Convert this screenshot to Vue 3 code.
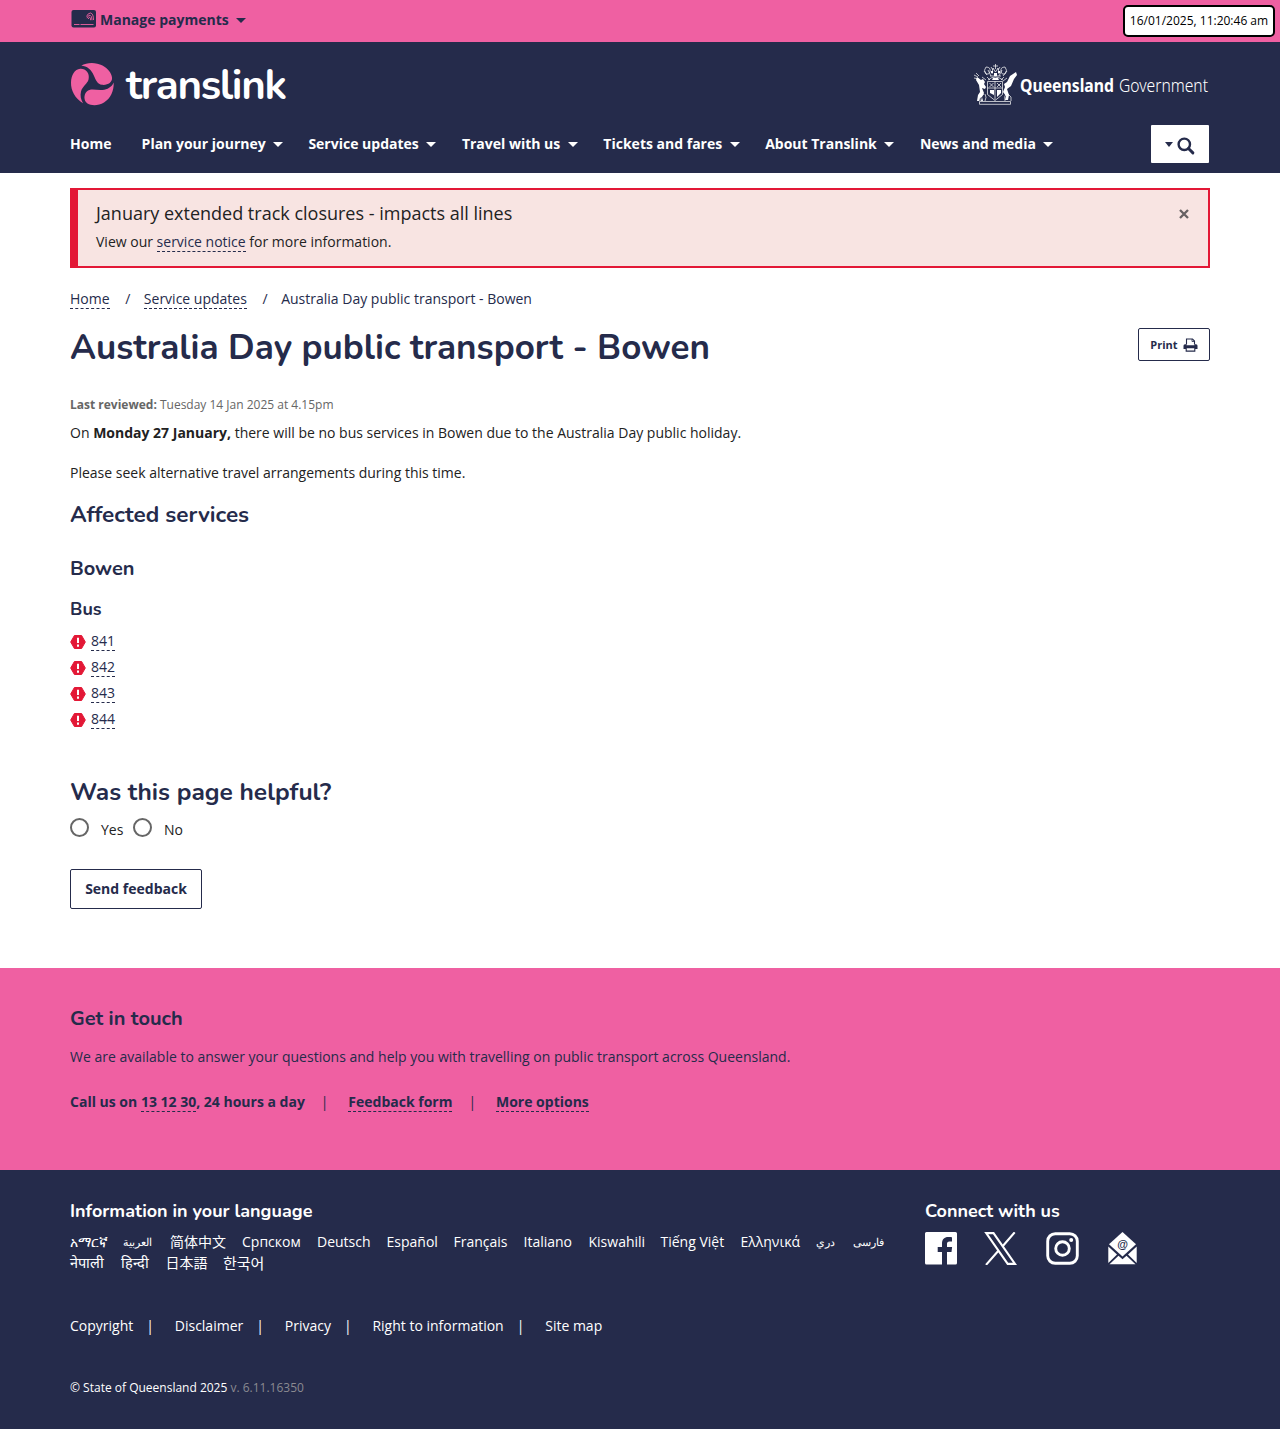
<script setup>
const nav = [
  { label: 'Home', w: 41.6 },
  { label: 'Plan your journey', w: 124, menu: true },
  { label: 'Service updates', w: 110.7, menu: true },
  { label: 'Travel with us', w: 98.7, menu: true },
  { label: 'Tickets and fares', w: 119, menu: true },
  { label: 'About Translink', w: 112, menu: true },
  { label: 'News and media', w: 116, menu: true },
]
const routes = ['841', '842', '843', '844']
const languages = [
  [
    { t: 'አማርኛ', w: 37 }, { t: 'العربية', w: 31, ar: true }, { t: '简体中文', w: 56 },
    { t: 'Српском', w: 59 }, { t: 'Deutsch', w: 53.5 }, { t: 'Español', w: 51 },
    { t: 'Français', w: 54 }, { t: 'Italiano', w: 49 }, { t: 'Kiswahili', w: 56 },
    { t: 'Tiếng Việt', w: 64 }, { t: 'Ελληνικά', w: 59.5 }, { t: 'دري', w: 20.5, ar: true },
    { t: 'فارسی', w: 32, ar: true },
  ],
  [
    { t: 'नेपाली', w: 34.5, hi: true }, { t: 'हिन्दी', w: 29, hi: true }, { t: '日本語', w: 41.5, jp: true }, { t: '한국어', w: 42, ko: true },
  ],
]
const legal = ['Copyright', 'Disclaimer', 'Privacy', 'Right to information', 'Site map']
</script>

<template>
  <div class="page">
    <div class="topbar">
      <div class="wrap topbar-in">
        <svg class="card" width="25" height="18" viewBox="0 0 25 18">
          <rect x=".5" y="0" width="24.5" height="17.5" rx="2" fill="#252b4b" />
          <path d="M3 14.500h5.500M9.500 14.500h13" stroke="#ef60a2" stroke-width=".9" />
          <g fill="none" stroke="#ef60a2" stroke-width=".9">
            <path d="M15.500 6.500q1.500-3.500 4-3.500q3 .6 3 7M16 8.200q1-3 3-3q2 .5 2 5M17.300 9q.5-1.800 1.400-1.800q1 .5.900 3" />
          </g>
        </svg>
        <span class="pay">Manage payments</span><i class="caret"></i>
      </div>
      <div class="clock">16/01/2025, 11:20:46 am</div>
    </div>

    <header class="header">
      <div class="wrap">
        <div class="brand">
          <div class="logo">
            <svg width="44" height="44" viewBox="0 0 44 44">
              <g fill="#ef60a2">
                <path d="M11.300 3.600C17 .2 26 .1 32.500 3.600C38 6.600 41.500 11.300 42 15.500C42.600 20.500 37.500 23.400 32 22.800C27.500 22.300 26 18.500 23.800 13.500C21.300 7.500 17 4.300 11.300 3.600Z" />
                <path d="M10.200 6.800C15.500 6.400 20 11 18.600 17.300C17.500 22 12.500 24 11 29.500C10 33.300 10.800 37.500 13 41.200C5 36.500 .8 28.500 1 20.500C1.200 13 4.700 7.200 10.200 6.800Z" />
                <path d="M43.700 20.500C44 29 40.500 36.500 34 40.500C28.500 43.900 21.500 44 17.500 41.500C13.500 38.800 13.600 32.500 16.800 29.500C20.500 26 26 28.500 32.500 28C37.500 27.500 41.500 25.300 43.700 20.500Z" />
              </g>
            </svg>
            <svg class="wordmark" width="180" height="56" viewBox="0 0 180 56">
              <text x="6" y="37" textLength="161" class="word">translink</text>
            </svg>
          </div>
          <div class="gov">
            <svg width="45" height="43" viewBox="0 0 45 43">
              <g fill="none" stroke="#fff" stroke-width=".7">
                <path d="M6.500 38.500h31v2.800h-31zM13 11q-3-4 0-7q5 0 4 5q-1 3-4 2M32 11q3-4 0-7q-5 0-4 5q1 3 4 2" />
                <path d="M14.500 18.500h15v13l-7.500 6-7.500-6zM14.500 25h15M22 18.500v18M16.500 20l4 4m0-4-4 4M24 20l4 4m0-4-4 4" />
                <path d="M15 17q7-6 15 0M17 13h11M19 11l1-6 2.500 4 2.500-4 1 6M22.500 1v5M20 3h5M14 14l3 3M31 14l-3 3M9 14l4 3M34 15l-4 3M11 8l3 4M15 7l3 6M29 7l-3 6M34 8l-4 5M18 4l2 3M27 4l-2 3" />
                <path d="M1 12l4 2M3 10l3 3M1 15l5 1M7 38v-4l4-3M38 38v-4l-4-4M12 38q2-4 0-7M32 38q-1-5 1-7" />
              </g>
              <g fill="#fff">
                <path d="M4 14l4 3 2-1 2 3-1 2 2 3-1 2-3-1 2 5-2 4 1 4H8l1-4-2 1-1 3H4l1-6 2-3-1-7-3-5z" />
                <path d="M43 9l1 3-3 4-3 7-4 3 2 6-1 5h-3l1-4-3-4 2-5-1-3 3-2 3-6 3-2z" />
                <path d="M17 27h4v5l-4-2zM24 27h4v3l-4 4zM20 15h5l1 2h-7zM18 8h2v2h-2zM25 8h2v2h-2zM21 10h3v3h-3z" />
              </g>
            </svg>
            <svg class="govword" width="210" height="36" viewBox="0 0 210 36">
              <text x="2" y="21" textLength="94" lengthAdjust="spacingAndGlyphs" class="qld">Queensland</text>
              <text x="101" y="21" textLength="89" lengthAdjust="spacingAndGlyphs" class="gvt">Government</text>
            </svg>
          </div>
        </div>
        <nav class="nav">
          <a v-for="n in nav" :key="n.label" :class="{ menu: n.menu }">
            <span :style="{ width: n.w + 'px' }">{{ n.label }}</span><i v-if="n.menu" class="caret"></i>
          </a>
          <button class="search">
            <i class="caret small"></i>
            <svg width="18" height="18" viewBox="0 0 18 18" fill="none" stroke="#252b4b">
              <circle cx="7.300" cy="7.300" r="5.700" stroke-width="2.400" />
              <path d="M11.500 11.500l4.400 4.400" stroke-width="2.900" stroke-linecap="round" />
            </svg>
          </button>
        </nav>
      </div>
    </header>

    <main class="wrap main">
      <section class="alert">
        <div>
          <p class="alert-title">January extended track closures - impacts all lines</p>
          <p class="alert-text">View our <a class="link">service notice</a> for more information.</p>
        </div>
        <svg class="close" width="12" height="12" viewBox="0 0 12 12"><path d="M2 2l8 8M10 2l-8 8" stroke="#666062" stroke-width="2.300" /></svg>
      </section>

      <div class="crumbs">
        <a class="link">Home</a><span class="sep">/</span><a class="link">Service updates</a><span class="sep">/</span><span>Australia Day public transport - Bowen</span>
      </div>

      <div class="title-row">
        <h1>Australia Day public transport - Bowen</h1>
        <button class="print">Print
          <svg width="15" height="14" viewBox="0 0 15 14">
            <path d="M3.500 6.500V1h6L11.500 3v3.500" fill="none" stroke="#252b4b" stroke-width="1.100" />
            <path d="M9 1v2.500h2.500" fill="none" stroke="#252b4b" stroke-width=".8" />
            <path d="M2 6.300h1.500v1h8v-1H13q1.500 0 1.500 1.500v3.200H12V9.500H3v1.500H.5V7.800Q.5 6.300 2 6.300z" fill="#252b4b" />
            <path d="M3.200 9.600v3.500h8.600V9.600z" fill="#fff" stroke="#252b4b" stroke-width="1.100" />
          </svg>
        </button>
      </div>

      <p class="reviewed"><b>Last reviewed:</b> <span>Tuesday 14 Jan 2025 at 4.15pm</span></p>
      <p class="para p1">On <b>Monday 27 January,</b> there will be no bus services in Bowen due to the Australia Day public holiday.</p>
      <p class="para p2">Please seek alternative travel arrangements during this time.</p>

      <h2>Affected services</h2>
      <h3>Bowen</h3>
      <h4>Bus</h4>
      <ul class="routes">
        <li v-for="r in routes" :key="r">
          <svg width="16" height="14" viewBox="0 0 16 14">
            <path d="M4.400.5h7.200L15.300 7l-3.700 6.500H4.400L.7 7z" fill="#e31836" stroke="#e31836" stroke-linejoin="round" />
            <path d="M8 2.700v5.200M8 9.500v2.200" stroke="#fff" stroke-width="2" />
          </svg>
          <a class="link">{{ r }}</a>
        </li>
      </ul>

      <h2 class="helpful">Was this page helpful?</h2>
      <div class="radios">
        <i></i><span class="yes">Yes</span><i></i><span>No</span>
      </div>
      <button class="send">Send feedback</button>
    </main>

    <section class="touch">
      <div class="wrap">
        <h3>Get in touch</h3>
        <p class="touch-text">We are available to answer your questions and help you with travelling on public transport across Queensland.</p>
        <div class="contacts">
          <span>Call us on <a class="link">13 12 30</a>, 24 hours a day</span>
          <span class="bar">|</span>
          <a class="link">Feedback form</a>
          <span class="bar">|</span>
          <a class="link">More options</a>
        </div>
      </div>
    </section>

    <footer class="footer">
      <div class="wrap">
        <div class="cols">
          <div class="lang">
            <h4 class="lang-title">Information in your language</h4>
            <div v-for="(row, i) in languages" :key="i" class="lang-row">
              <a v-for="l in row" :key="l.t" :class="{ ar: l.ar, jp: l.jp, hi: l.hi, ko: l.ko }" :style="{ width: l.w + 'px' }">{{ l.t }}</a>
            </div>
          </div>
          <div class="social">
            <h4>Connect with us</h4>
            <div class="icons">
              <svg width="32" height="33" viewBox="0 0 32 33"><path d="M1.500 0h29Q32 0 32 1.500v29.500q0 1.500-1.500 1.500H22V20h4.500l.6-5H22v-3.200c0-1.500.6-2.400 2.500-2.400H27V5.200C26.400 5.100 25 5 23.200 5c-3.800 0-6.200 2.300-6.200 6.300V15h-4.300v5H17v12.500H1.500Q0 32.500 0 31V1.500Q0 0 1.500 0z" fill="#fff" /></svg>
              <svg class="x" width="33" height="33" viewBox="0 0 33 33"><path d="M2.200 1.100h7.300l21.500 30.800h-7.300zM30.700.3L18.200 14.800M14.400 18.700L2 32.900" fill="none" stroke="#fff" stroke-width="2.100" /></svg>
              <svg class="ig" width="33" height="33" viewBox="0 0 33 33"><rect x="1.700" y="1.700" width="29.600" height="29.600" rx="7.500" fill="none" stroke="#fff" stroke-width="2.900" /><circle cx="16.500" cy="16.500" r="6.800" fill="none" stroke="#fff" stroke-width="2.900" /><circle cx="25.200" cy="7.900" r="2" fill="#fff" /></svg>
              <svg class="mail" width="29" height="33" viewBox="0 0 29 33">
                <path d="M14.500 0L28 12.200 14.500 24.500 1 12.200z" fill="#fff" />
                <path d="M.3 14.500L9 22.500.3 31zM28.700 14.500L20 22.500l8.700 8.500zM1.500 32.300l9-8.500 4 3.500 4-3.500 9 8.500z" fill="#fff" />
                <text x="14.500" y="16" text-anchor="middle" class="at">@</text>
              </svg>
            </div>
          </div>
        </div>
        <div class="legal">
          <template v-for="(l, i) in legal" :key="l">
            <a>{{ l }}</a><span v-if="i < legal.length - 1" class="pipe">|</span>
          </template>
        </div>
        <p class="copy"><span>© State of Queensland 2025</span> <small>v. 6.11.16350</small></p>
      </div>
    </footer>
  </div>
</template>

<style>
body { margin: 0; background: #fff; }
</style>
<style scoped>
* { box-sizing: border-box; }
.page { width: 1280px; height: 1429px; overflow: hidden; font-family: "Open Sans", "Noto Sans CJK SC", sans-serif; font-size: 14px; color: #222; line-height: 20px; }
p, h1, h2, h3, h4, ul { margin: 0; padding: 0; }
h1, h2, h3, h4 { font-family: Nunito, Lato, "Open Sans", sans-serif; color: #252b4b; font-weight: 700; white-space: nowrap; }
button { font-family: inherit; padding: 0; background: #fff; color: #252b4b; font-weight: 700; }
.wrap { width: 1140px; margin: 0 auto; }
.link { border-bottom: 1px dashed #252b4b; color: #252b4b; }
.caret { display: inline-block; border: 5px solid transparent; border-top-width: 5.500px; border-top-color: currentColor; border-bottom: 0; flex: none; }
.topbar { background: #ef60a2; height: 42px; display: flex; position: relative; }
.topbar-in { display: flex; align-items: center; height: 40px; color: #252b4b; font-weight: 700; }
.card { margin: 0 4px 2px 1px; }
.pay { width: 129px; margin-right: 7px; white-space: nowrap; }
.clock { position: absolute; right: 5px; top: 5px; width: 152px; height: 32px; border: 2px solid #000; border-radius: 5px; background: #fff; color: #000; font-size: 12px; line-height: 28px; text-align: center; white-space: nowrap; }
.header { background: #252b4b; height: 131px; color: #fff; }
.brand { display: flex; justify-content: space-between; height: 83px; padding-top: 20px; }
.logo { display: flex; }
.wordmark { margin: 0 0 0 6px; }
.word { font: 700 42px Nunito, Lato, sans-serif; fill: #fff; }
.gov { display: flex; padding-top: 1px; margin-right: -18px; }
.govword { margin-top: 8px; }
.qld { font: 700 18px "Noto Sans", sans-serif; fill: #fff; }
.gvt { font: 300 18px "Noto Sans", sans-serif; fill: #fff; }
.nav { display: flex; height: 38px; align-items: center; font-weight: 700; white-space: nowrap; }
.nav a { display: flex; align-items: center; margin-right: 30px; }
.nav a span { display: block; }
.nav a .caret { margin-left: 7.300px; }
.nav a.menu { margin-right: 25.500px; }
.search { margin-left: auto; margin-right: 1px; width: 58px; height: 38px; border: 0; border-radius: 1px; display: flex; align-items: center; justify-content: center; }
.search svg { margin-top: 4px; }
.search .small { margin-right: 4px; border-width: 5px 4.500px 0; }
.alert { margin-top: 15px; height: 80px; border: 2px solid #e31836; border-left-width: 8px; background: #f8e4e2; display: flex; justify-content: space-between; padding: 11px 18px 0 18px; }
.alert-title { font-size: 18px; line-height: 24px; }
.alert-text { margin-top: 7px; }
.close { margin-top: 7px; }
.crumbs { display: flex; margin-top: 21px; height: 20px; color: #252b4b; white-space: nowrap; }
.sep { margin: 0 12.600px 0 15.700px; width: 6px; }
.title-row { display: flex; justify-content: space-between; margin-top: 19px; height: 67px; }
h1 { font-size: 35px; line-height: 39px; }
.print { width: 72px; height: 33px; border: 1px solid #252b4b; border-radius: 2px; font-size: 11px; display: flex; align-items: center; justify-content: center; gap: 5px; }
.reviewed { font-size: 12px; color: #666; }
.para { height: 20px; white-space: nowrap; }
.p1 { margin-top: 8px; }
.p2 { margin-top: 20px; }
h2 { font-size: 22.500px; line-height: 24px; margin-top: 20px; }
h3 { font-size: 20px; line-height: 24px; margin-top: 30px; }
h4 { font-size: 18px; line-height: 24px; margin-top: 16px; }
.routes { list-style: none; margin-top: 7px; }
.routes li { height: 26px; display: flex; align-items: flex-start; padding-top: 3px; gap: 5px; }
.routes svg { margin-top: 4px; }
.routes a { line-height: 19px; }
.helpful { font-size: 24.500px; line-height: 30px; margin-top: 45px; }
.radios { display: flex; margin-top: 11px; height: 24px; }
.radios i { width: 19px; height: 19px; border: 2px solid #666; border-radius: 50%; }
.radios span { margin: 2px 0 0 12px; }
.radios .yes { width: 22px; margin-right: 10px; }
.send { margin-top: 27px; width: 132px; height: 40px; padding-bottom: 2px; border: 1px solid #252b4b; border-radius: 2px; font-size: 14px; display: block; white-space: nowrap; }
.touch { background: #ef60a2; margin-top: 59px; height: 202px; padding-top: 39px; color: #252b4b; }
.touch h3 { margin: 0; line-height: 24px; }
.touch-text { margin-top: 16px; white-space: nowrap; }
.contacts { display: flex; align-items: center; font-weight: 700; margin-top: 26px; height: 18px; white-space: nowrap; }
.contacts .link { line-height: 18px; }
.bar { font-weight: 400; width: 8px; margin: 0 19.500px 0 16px; }
.footer { background: #252b4b; height: 259px; color: #fff; padding-top: 29px; }
.footer h4 { color: #fff; margin: 0; font-size: 18px; }
.cols { display: flex; height: 117px; }
.lang { width: 855px; }
.footer .lang-title { margin-bottom: 8px; }
.lang-row { display: flex; gap: 16px; height: 21px; line-height: 21px; white-space: nowrap; }
.lang-row a { display: block; flex: none; }
.ar { font-size: 10.800px; }
.hi { font-size: 14.500px; }
.jp { font-family: "Noto Sans CJK JP", sans-serif; }
.ko { font-family: "Noto Sans CJK KR", sans-serif; font-size: 15px; }
.icons { display: flex; margin-top: 9px; }
.x { margin-left: 27px; }
.ig { margin-left: 29px; }
.mail { margin-left: 28.500px; }
.at { font: 700 11px "Liberation Sans", sans-serif; fill: #252b4b; }
.legal { display: flex; align-items: center; height: 20px; white-space: nowrap; }
.pipe { width: 8px; margin: 0 20.500px 0 13px; }
.copy { font-size: 12px; margin-top: 42px; white-space: nowrap; }
.copy small { font-size: 12px; color: #8a8a91; }
</style>
